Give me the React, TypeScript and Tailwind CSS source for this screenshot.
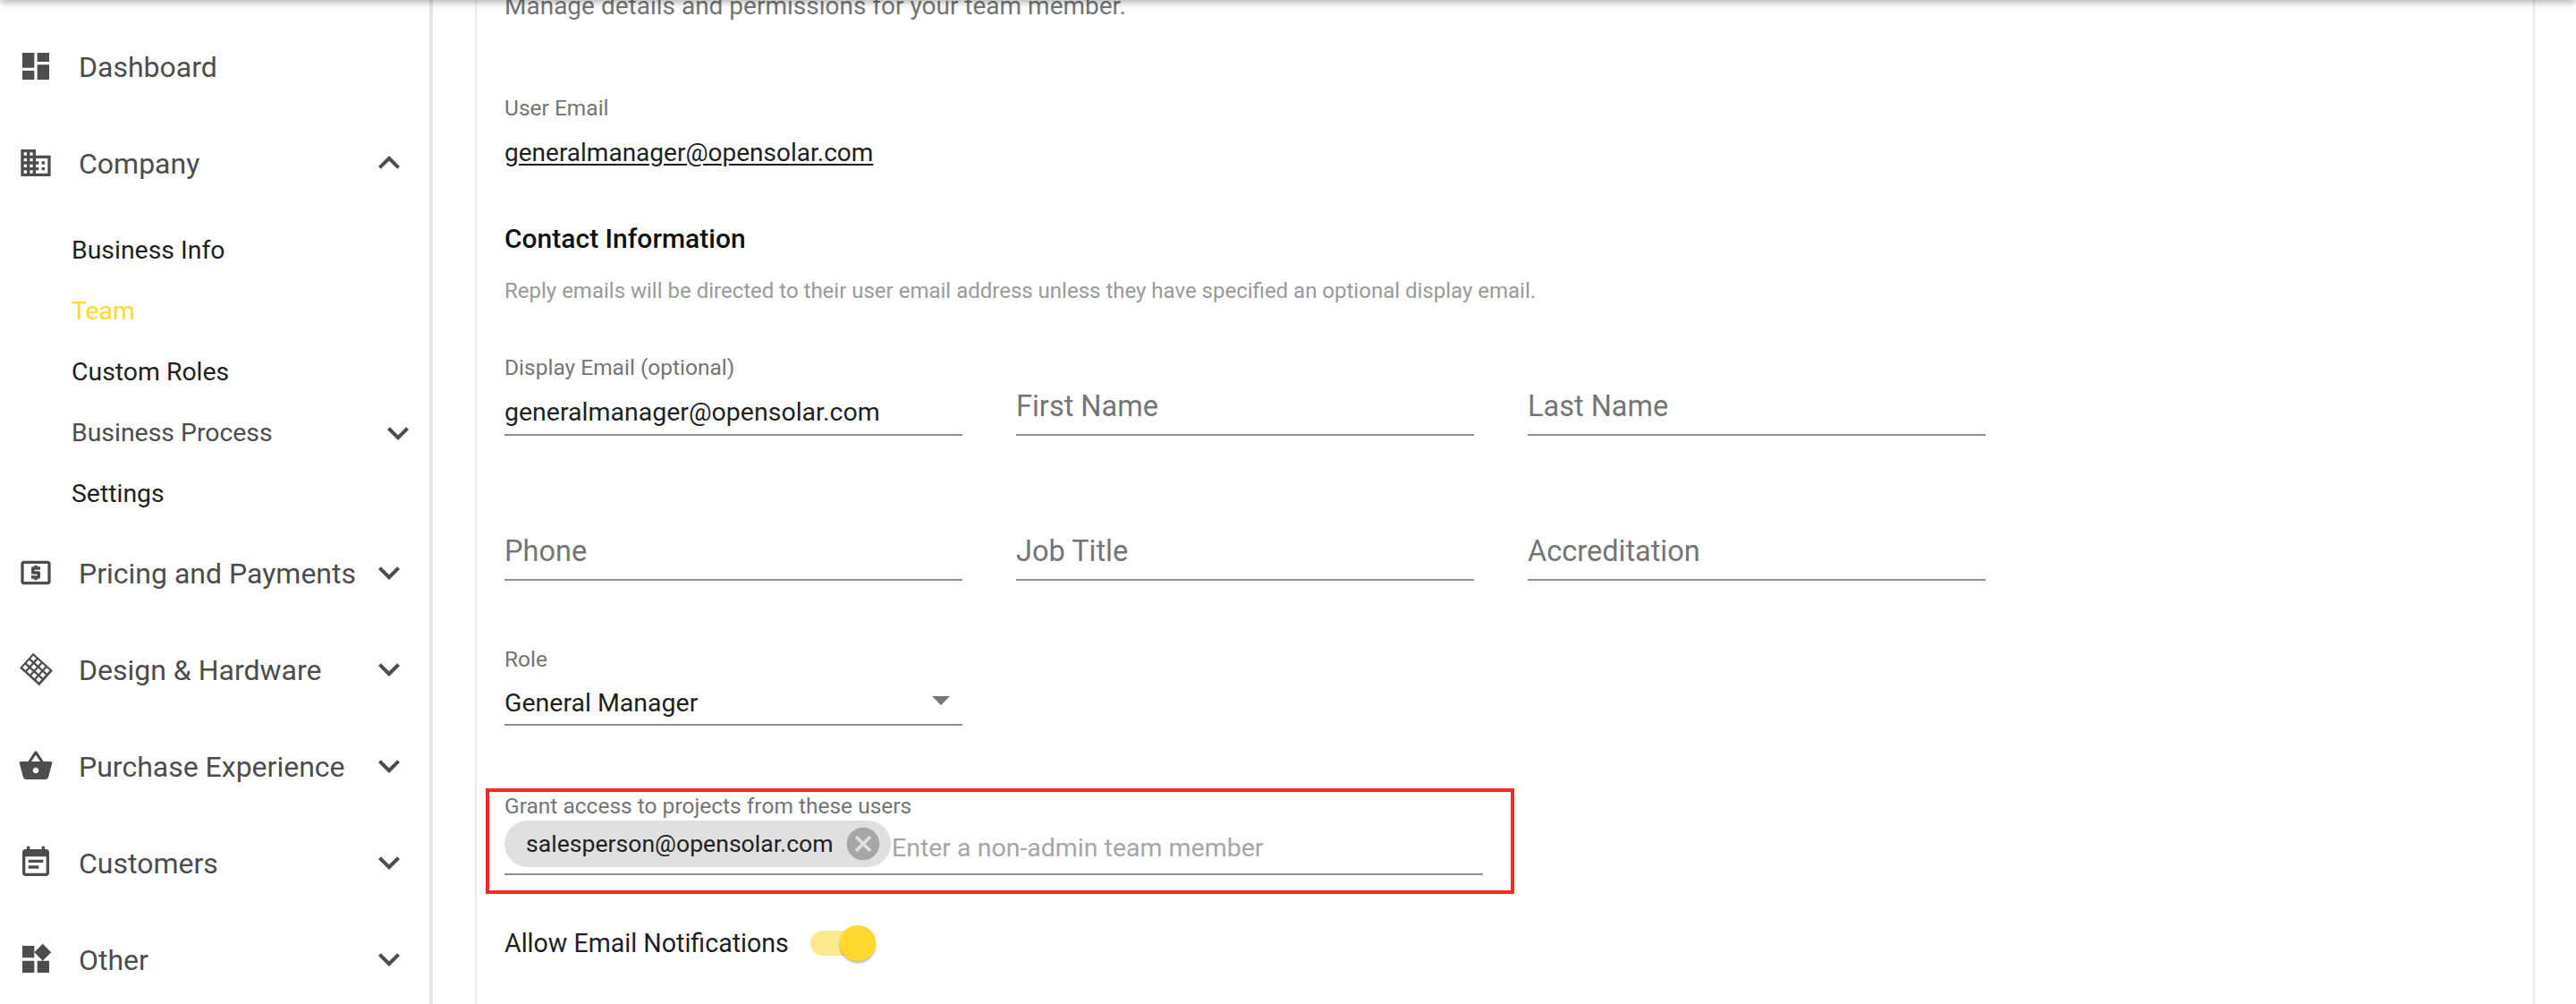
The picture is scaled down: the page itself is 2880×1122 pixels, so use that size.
import React from "react";

const P = {
  dashboard: "M3 13h8V3H3v10zm0 8h8v-6H3v6zm10 0h8V11h-8v10zm0-18v6h8V3h-8z",
  domain: "M12 7V3H2v18h20V7H12zM6 19H4v-2h2v2zm0-4H4v-2h2v2zm0-4H4V9h2v2zm0-4H4V5h2v2zm4 12H8v-2h2v2zm0-4H8v-2h2v2zm0-4H8V9h2v2zm0-4H8V5h2v2zm10 12h-8v-2h2v-2h-2v-2h2v-2h-2V9h8v10zm-2-8h-2v2h2v-2zm0 4h-2v2h2v-2z",
  atm: "M11 17h2v-1h1c.55 0 1-.45 1-1v-3c0-.55-.45-1-1-1h-3v-1h4V8h-2V7h-2v1h-1c-.55 0-1 .45-1 1v3c0 .55.45 1 1 1h3v1H9v2h2v1zm9-13H4c-1.11 0-1.99.89-1.99 2L2 18c0 1.11.89 2 2 2h16c1.11 0 2-.89 2-2V6c0-1.11-.89-2-2-2zm0 14H4V6h16v12z",
  basket: "M17.21 9l-4.38-6.56c-.19-.28-.51-.42-.83-.42-.32 0-.64.14-.83.43L6.79 9H2c-.55 0-1 .45-1 1 0 .09.01.18.04.27l2.54 9.27c.23.84 1 1.46 1.92 1.46h13c.92 0 1.69-.62 1.93-1.46l2.54-9.27L23 10c0-.55-.45-1-1-1h-4.79zM9 9l3-4.4L15 9H9zm3 8c-1.1 0-2-.9-2-2s.9-2 2-2 2 .9 2 2-.9 2-2 2z",
  event: "M17 10H7v2h10v-2zm2-7h-1V1h-2v2H8V1H6v2H5c-1.11 0-1.99.9-1.99 2L3 19c0 1.1.89 2 2 2h14c1.1 0 2-.9 2-2V5c0-1.1-.9-2-2-2zm0 16H5V8h14v11zm-5-5H7v2h7v-2z",
  widgets: "M13 13v8h8v-8h-8zM3 21h8v-8H3v8zM3 3v8h8V3H3zm13.66-1.31L11 7.34 16.66 13l5.66-5.66-5.66-5.65z",
  more: "M16.59 8.59L12 13.17 7.41 8.59 6 10l6 6 6-6z",
  less: "M12 8l-6 6 1.41 1.41L12 10.83l4.59 4.58L18 14z",
  cancel: "M12 2C6.47 2 2 6.47 2 12s4.47 10 10 10 10-4.47 10-10S17.53 2 12 2zm5 13.59L15.59 17 12 13.41 8.41 17 7 15.59 10.59 12 7 8.41 8.41 7 12 10.59 15.59 7 17 8.41 13.41 12 17 15.59z",
};

function Icon({ d, className }: { d: string; className: string }) {
  return (
    <svg viewBox="0 0 24 24" className={className} fill="currentColor">
      <path d={d} />
    </svg>
  );
}

function PanelIcon() {
  const holes: React.ReactElement[] = [];
  for (let c = 0; c < 4; c++) {
    for (let r = 0; r < 3; r++) {
      holes.push(<rect key={`${c}-${r}`} x={-11.2 + c * 5.95} y={-8.1 + r * 5.95} width={3.9} height={3.9} fill="#fff" />);
    }
  }
  return (
    <svg viewBox="0 0 40 40" className="w-10 h-10 shrink-0">
      <g transform="translate(20.5 20) rotate(42) scale(1.13)">
        <rect x={-13} y={-10} width={26} height={20} fill="#4d4d4d" />
        {holes}
      </g>
    </svg>
  );
}

function NavRow({ label, icon, open, chevron = true }: { label: string; icon: React.ReactNode; open?: boolean; chevron?: boolean }) {
  return (
    <div className="h-[108px] flex items-center pl-5 pr-[21px] text-[#4d4d4d]">
      {icon}
      <span className="ml-[28px] mt-[1px] text-[32px] flex-1 whitespace-nowrap">{label}</span>
      {chevron && <Icon d={open ? P.less : P.more} className="w-12 h-12 shrink-0" />}
    </div>
  );
}

function SubItem({ label, color = "text-[#1f1f1f]", chevron }: { label: string; color?: string; chevron?: boolean }) {
  return (
    <div className={`h-[68px] flex items-center pl-[80px] pr-[11px] text-[28.4px] ${color}`}>
      <span className="flex-1 mt-[1px]">{label}</span>
      {chevron && <Icon d={P.more} className="w-12 h-12 shrink-0" />}
    </div>
  );
}

function Sidebar() {
  const ic = "w-10 h-10 shrink-0";
  return (
    <aside className="w-[484px] shrink-0 border-r-[4px] border-[#e6e6e6] pt-5 h-full">
      <NavRow label="Dashboard" icon={<Icon d={P.dashboard} className={ic} />} chevron={false} />
      <NavRow label="Company" icon={<Icon d={P.domain} className={ic} />} open />
      <div className="pt-[10px]">
        <SubItem label="Business Info" />
        <SubItem label="Team" color="text-[#ffd92e]" />
        <SubItem label="Custom Roles" />
        <SubItem label="Business Process" color="text-[#4d4d4d]" chevron />
        <SubItem label="Settings" />
      </div>
      <NavRow label="Pricing and Payments" icon={<Icon d={P.atm} className={ic} />} />
      <NavRow label="Design &amp; Hardware" icon={<PanelIcon />} />
      <NavRow label="Purchase Experience" icon={<Icon d={P.basket} className={ic} />} />
      <NavRow label="Customers" icon={<Icon d={P.event} className={ic} />} />
      <NavRow label="Other" icon={<Icon d={P.widgets} className={ic} />} />
    </aside>
  );
}

function Field({ placeholder, label, value }: { placeholder?: string; label?: string; value?: string }) {
  return (
    <div className="w-[512px] h-[106px] flex flex-col justify-end">
      {label && <div className="text-[24.5px] leading-[28px] text-[#757575] mb-[12px]">{label}</div>}
      <div className={`flex items-center border-b-[2px] border-[#8f8f8f] whitespace-nowrap ${value ? "h-[50px] text-[28.5px] text-[#1f1f1f]" : "h-[64px] text-[32.5px] text-[#757575]"}`}>
        {value ?? placeholder}
      </div>
    </div>
  );
}

function Card() {
  return (
    <div className="bg-white border-x-[2px] border-[#ececec] h-full pl-[31px] overflow-hidden">
      <p className="text-[28px] leading-[32px] text-[#757575] mt-[-9px]">Manage details and permissions for your team member.</p>
      <div className="text-[24.5px] leading-[28px] text-[#757575] mt-[84px]">User Email</div>
      <div className="text-[28px] leading-[32px] text-[#1f1f1f] underline underline-offset-[3px] mt-[20px]">generalmanager@opensolar.com</div>
      <h2 className="text-[30px] leading-[36px] font-medium text-[#111] mt-[62px]">Contact Information</h2>
      <p className="text-[24px] leading-[28px] text-[#9a9a9a] mt-[26px]">Reply emails will be directed to their user email address unless they have specified an optional display email.</p>
      <div className="flex gap-[60px] mt-[42px]">
        <Field label="Display Email (optional)" value="generalmanager@opensolar.com" />
        <Field placeholder="First Name" />
        <Field placeholder="Last Name" />
      </div>
      <div className="flex gap-[60px] mt-[56px]">
        <Field placeholder="Phone" />
        <Field placeholder="Job Title" />
        <Field placeholder="Accreditation" />
      </div>
      <div className="w-[512px] mt-[74px]">
        <div className="text-[24.5px] leading-[28px] text-[#757575]">Role</div>
        <div className="h-[48px] mt-[12px] flex items-center justify-between border-b-[2px] border-[#8f8f8f] text-[28.5px] text-[#1f1f1f]">
          General Manager
          <span className="w-0 h-0 border-x-[10px] border-t-[10px] border-x-transparent border-t-[#757575] mr-[14px] mb-[6px]" />
        </div>
      </div>
      <div className="w-[1150px] h-[118px] -ml-[21px] mt-[70px] border-[4px] border-[#ff2a1f] pl-[17px] pr-[31px]">
        <div className="text-[24.5px] leading-[28px] text-[#757575] mt-[2px]">Grant access to projects from these users</div>
        <div className="h-[61px] mt-[2px] flex border-b-[2px] border-[#8f8f8f] items-start">
          <div className="h-[52px] w-[432px] rounded-full bg-[#e0e0e0] flex items-center pl-[24px] pr-[10px] text-[26.6px] text-[#1f1f1f] shrink-0">
            <span className="flex-1 whitespace-nowrap">salesperson@opensolar.com</span>
            <Icon d={P.cancel} className="w-[44px] h-[44px] text-[#a6a6a6] -mr-[1px]" />
          </div>
          <span className="text-[28.5px] text-[#a6a6a6] ml-[1px] mt-[13px] leading-[36px] whitespace-nowrap">Enter a non-admin team member</span>
        </div>
      </div>
      <div className="flex items-center mt-[35px] h-[40px]">
        <span className="text-[28.6px] text-[#1f1f1f] whitespace-nowrap">Allow Email Notifications</span>
        <div className="relative w-[68px] h-[28px] rounded-full bg-[#fee98f] ml-[24px]">
          <div className="absolute -right-[5px] -top-[6px] w-10 h-10 rounded-full bg-[#ffd92e] shadow-[0_2px_3px_rgba(0,0,0,0.3)]" />
        </div>
      </div>
    </div>
  );
}

export default function App() {
  return (
    <div className="relative w-[2880px] h-[1122px] flex overflow-hidden bg-white font-['Roboto',sans-serif]">
      <Sidebar />
      <main className="flex-1 min-w-0 pl-[47px] pr-[46px] h-full">
        <Card />
      </main>
      <div className="absolute top-[-10px] left-0 right-0 h-[10px] bg-white shadow-[0_2px_8px_rgba(0,0,0,0.35)]" />
    </div>
  );
}
